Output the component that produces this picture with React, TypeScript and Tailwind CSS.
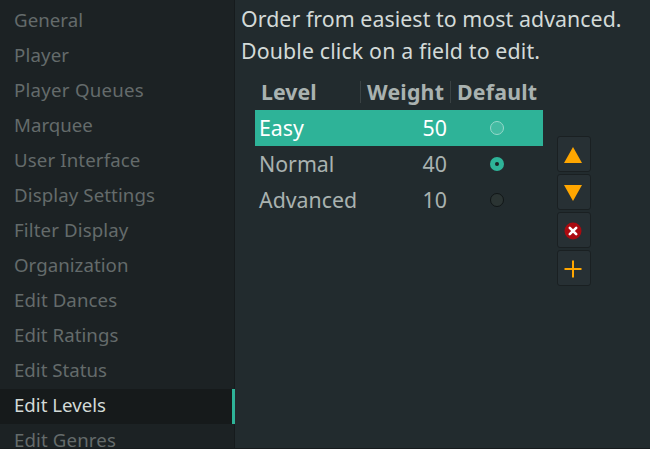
const sections = [
  { label: 'General', tracking: 'tracking-[0.05px]' },
  { label: 'Player', tracking: 'tracking-[0.15px]' },
  { label: 'Player Queues', tracking: 'tracking-[0.25px]' },
  { label: 'Marquee', tracking: 'tracking-normal' },
  { label: 'User Interface', tracking: 'tracking-[0.12px]' },
  { label: 'Display Settings', tracking: 'tracking-[0.1px]' },
  { label: 'Filter Display', tracking: 'tracking-[0.12px]' },
  { label: 'Organization', tracking: 'tracking-[0.04px]' },
  { label: 'Edit Dances', tracking: 'tracking-[0.08px]' },
  { label: 'Edit Ratings', tracking: 'tracking-[0.05px]' },
  { label: 'Edit Status', tracking: 'tracking-normal' },
  { label: 'Edit Levels', tracking: 'tracking-normal' },
  { label: 'Edit Genres', tracking: 'tracking-[0.12px]' },
];

const levels = [
  { name: 'Easy', weight: 50 },
  { name: 'Normal', weight: 40 },
  { name: 'Advanced', weight: 10 },
];

const selectedSection = 'Edit Levels';
const selectedLevel = 'Easy';
const defaultLevel = 'Normal';

function Sidebar() {
  return (
    <nav className="flex h-full w-[235px] shrink-0 flex-col bg-[#1c2224] text-[18.67px] leading-[31px] text-[#646b6b]">
      <div className="h-1 shrink-0 border-r border-[#161b1d]" />
      {sections.map(({ label, tracking }) => (
        <div
          key={label}
          className={
            label === selectedSection
              ? 'h-[35px] shrink-0 border-r-3 border-[#2eb398] bg-[#161a1b] pl-3.5 text-[#d3dad8]'
              : 'h-[35px] shrink-0 border-r border-[#161b1d] pl-3.5'
          }
        >
          <span className={tracking}>{label}</span>
        </div>
      ))}
    </nav>
  );
}

function Radio({ selected, checked }: { selected: boolean; checked: boolean }) {
  if (checked) {
    return (
      <span className="flex size-3.5 items-center justify-center rounded-full bg-[#2eb398]">
        <span className="size-1 rounded-full bg-[#1b2224]" />
      </span>
    );
  }
  return (
    <span
      className={
        selected
          ? 'size-3.5 rounded-full border border-[#96d9cb] bg-[#43bba2]'
          : 'size-3.5 rounded-full border border-[#111617] bg-[#2b3433]'
      }
    />
  );
}

function LevelTable() {
  return (
    <div className="w-[288px] text-[21.33px] leading-[30px] text-[#a9b2b0]">
      <div className="flex h-9 items-center font-bold">
        <span className="w-[105px] pl-1.5">Level</span>
        <span className="h-[22px] w-px bg-[#3a4244]" />
        <span className="w-[89px] pl-1.5 tracking-[0.2px]">Weight</span>
        <span className="h-[22px] w-px bg-[#3a4244]" />
        <span className="pl-1.5 tracking-[0.2px]">Default</span>
      </div>
      {levels.map(({ name, weight }) => (
        <div
          key={name}
          className={
            name === selectedLevel
              ? 'flex h-9 items-center bg-[#2eb398] text-white'
              : 'flex h-9 items-center'
          }
        >
          <span className="w-[106px] pl-1">{name}</span>
          <span className="w-[90px] pr-1 text-right">{weight}</span>
          <span className="flex flex-1 justify-center">
            <Radio selected={name === selectedLevel} checked={name === defaultLevel} />
          </span>
        </div>
      ))}
    </div>
  );
}

const buttonClass =
  'flex h-9 w-[34px] items-center justify-center rounded-[3px] border border-[#1a2022] bg-[#273034] pr-0.5';

function LevelActions() {
  return (
    <div className="mt-[62px] ml-3.5 flex flex-col gap-0.5">
      <button className={buttonClass} aria-label="Move up">
        <svg className="mt-0.5" width="18" height="16" viewBox="0 0 18 16">
          <path d="M9 0 L18 16 H0 Z" fill="#ffa600" />
        </svg>
      </button>
      <button className={buttonClass} aria-label="Move down">
        <svg className="mt-0.5" width="18" height="16" viewBox="0 0 18 16">
          <path d="M0 0 H18 L9 16 Z" fill="#ffa600" />
        </svg>
      </button>
      <button className={buttonClass} aria-label="Delete">
        <svg className="mt-0.5" width="18" height="18" viewBox="0 0 18 18">
          <circle cx="9" cy="9" r="8.5" fill="#aa0a10" />
          <path d="M5.8 5.8 L12.2 12.2 M12.2 5.8 L5.8 12.2" stroke="#fff" strokeWidth="2.6" strokeLinecap="round" />
        </svg>
      </button>
      <button className={buttonClass} aria-label="Add">
        <svg className="mt-0.5" width="18" height="18" viewBox="0 0 18 18">
          <path d="M9 0.5 V17.5 M0.5 9 H17.5" stroke="#ffa600" strokeWidth="2" />
        </svg>
      </button>
    </div>
  );
}

export default function App() {
  return (
    <div className="flex h-[449px] w-[650px] overflow-hidden border-b border-[#171c1e] bg-[#222b2e] font-['Noto_Sans',sans-serif]">
      <Sidebar />
      <main className="flex-1 pt-[3px] pl-1.5 whitespace-nowrap">
        <p className="text-[21.33px] leading-8 tracking-[0.06px] text-[#d3dad8]">
          Order from easiest to most advanced.
        </p>
        <p className="text-[21.33px] leading-8 tracking-[0.14px] text-[#d3dad8]">
          Double click on a field to edit.
        </p>
        <div className="mt-[7px] ml-3.5 flex items-start">
          <LevelTable />
          <LevelActions />
        </div>
      </main>
    </div>
  );
}
